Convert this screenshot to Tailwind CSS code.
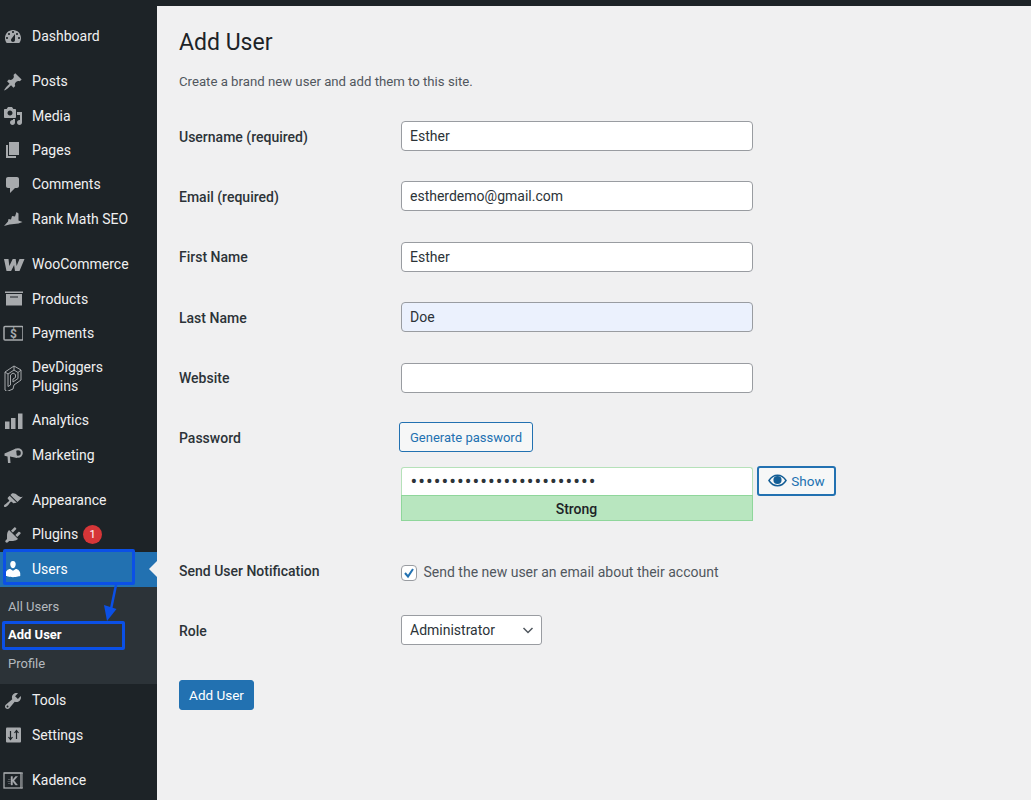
<!DOCTYPE html>
<html lang="en">
<head>
<meta charset="UTF-8">
<title>Add User</title>
<script src="https://cdn.jsdelivr.net/npm/@tailwindcss/browser@4"></script>
</head>
<body class="bg-[#f0f0f1] font-['Roboto','Noto_Sans',sans-serif] text-[14px] text-[#1d2327] h-[800px] overflow-hidden">
<div class="h-[6px] bg-[#1d2327]"></div>
<div class="flex">
  <!-- Sidebar -->
  <nav class="relative w-[156.5px] h-[794px] shrink-0 bg-[#1d2327] text-[#f0f0f1] pt-[13.500px]">
    <a class="flex items-center h-[34.4px]"><svg class="w-5 h-5 ml-[3px] mr-[9px] fill-[#a7aaad]" viewBox="0 0 20 20"><path d="M3.76 16h12.48c1.1-1.37 1.76-3.11 1.76-5 0-4.42-3.58-8-8-8s-8 3.58-8 8c0 1.89.66 3.63 1.76 5zM10 4c.55 0 1 .45 1 1s-.45 1-1 1-1-.45-1-1 .45-1 1-1zM6 6c.55 0 1 .45 1 1s-.45 1-1 1-1-.45-1-1 .45-1 1-1zm8 0c.55 0 1 .45 1 1s-.45 1-1 1-1-.45-1-1 .45-1 1-1zm-5.37 5.55L12 7v6c0 1.1-.9 2-2 2s-2-.9-2-2c0-.57.24-1.08.63-1.45zM4 10c.55 0 1 .45 1 1s-.45 1-1 1-1-.45-1-1 .45-1 1-1zm12 0c.55 0 1 .45 1 1s-.45 1-1 1-1-.45-1-1 .45-1 1-1z" fill-rule="evenodd"/></svg>Dashboard</a>

    <a class="flex items-center h-[34.4px] mt-[10.6px]"><svg class="w-5 h-5 ml-[3px] mr-[9px] fill-[#a7aaad]" viewBox="0 0 20 20"><path d="M10.44 3.02l1.82-1.82 6.36 6.35-1.83 1.82c-1.05-.68-2.48-.57-3.41.36l-.75.75c-.92.93-1.04 2.35-.35 3.41l-1.83 1.82-2.41-2.41-2.8 2.79c-.42.42-3.38 2.71-3.8 2.29s1.86-3.39 2.28-3.81l2.79-2.79L4.1 9.36l1.83-1.82c1.05.69 2.48.57 3.4-.36l.75-.75c.93-.92 1.05-2.35.36-3.41z"/></svg>Posts</a>
    <a class="flex items-center h-[34.4px]"><svg class="w-5 h-5 ml-[3px] mr-[9px] fill-[#a7aaad]" viewBox="0 0 20 20"><path d="M13 11V4c0-.55-.45-1-1-1h-1.67L9 1H5L3.67 3H2c-.55 0-1 .45-1 1v7c0 .55.45 1 1 1h10c.55 0 1-.45 1-1zM7 4.500c1.380 0 2.500 1.120 2.500 2.500S8.380 9.500 7 9.500 4.500 8.380 4.500 7 5.620 4.500 7 4.500zM14 6h5v10.500c0 1.380-1.120 2.500-2.500 2.500S14 17.880 14 16.500s1.120-2.500 2.500-2.500c.17 0 .34.02.5.05V9h-3V6zm-4 8.050V13h2v3.500c0 1.380-1.120 2.500-2.500 2.500S7 17.880 7 16.500 8.120 14 9.500 14c.17 0 .34.02.5.05z" fill-rule="evenodd"/></svg>Media</a>
    <a class="flex items-center h-[34.4px]"><svg class="w-5 h-5 ml-[3px] mr-[9px] fill-[#a7aaad]" viewBox="0 0 20 20"><path d="M6 15V2h10v13H6zm-1 1h8v2H3V5h2v11z"/></svg>Pages</a>
    <a class="flex items-center h-[34.4px]"><svg class="w-5 h-5 ml-[3px] mr-[9px] fill-[#a7aaad]" viewBox="0 0 20 20"><path d="M5 2h9c1.100 0 2 .9 2 2v7c0 1.100-.9 2-2 2h-2l-5 5v-5H5c-1.100 0-2-.9-2-2V4c0-1.100.9-2 2-2z"/></svg>Comments</a>
    <a class="flex items-center h-[34.4px]"><svg class="w-[21px] h-5 ml-[3px] mr-[8px] fill-[#a7aaad]" viewBox="0 0 21 20"><path d="M1 17l4-4.500.5-2.500 2.500.5L9 7l3 .5L13.500 3l2 1.500v7l4 1.500-4 1.500-9 1z"/></svg>Rank Math SEO</a>

    <a class="flex items-center h-[34.4px] mt-[11px]"><svg class="w-[22px] h-5 ml-[3px] mr-[7px]" viewBox="0 0 22 20"><path d="M1 4h4.500l.8 7 3.400-7h3l.9 7 2.900-7h5l-5 12h-4.500l-.9-6-3 6H3.500z" class="fill-[#a7aaad]"/></svg>WooCommerce</a>
    <a class="flex items-center h-[34.4px]"><svg class="w-5 h-5 ml-[3px] mr-[9px] fill-[#a7aaad]" viewBox="0 0 20 20"><path d="M2 2.500h18v1.500H2zM3 5h16v11.500H3zm4 2.500v1h8v-1z" fill-rule="evenodd"/></svg>Products</a>
    <a class="flex items-center h-[34.4px]"><svg class="w-5 h-5 ml-[3px] mr-[9px]" viewBox="0 0 20 20"><rect x="1" y="3.500" width="19" height="13.500" rx="1" fill="none" stroke="#a7aaad" stroke-width="1.500"/><text x="10.500" y="14.500" text-anchor="middle" font-size="12" font-weight="700" fill="#a7aaad">$</text></svg>Payments</a>
    <a class="flex items-center h-[53px]"><svg class="w-5 h-[28px] ml-[3px] mr-[9px] fill-none stroke-[#a7aaad]" viewBox="0 0 20 28" stroke-width="1"><path d="M2 9l9-6 7 4v10l-7 5-1 4-6 2.500-2-1.500zM5 11l6-4 4 2.500v6l-5 3.500v-3l2.500-1.500v-3L10 10 7.500 12v10L5 23.500zM2 9l3 2M11 3v4M18 7l-3 2.500"/></svg><span class="leading-[19px]">DevDiggers<br>Plugins</span></a>
    <a class="flex items-center h-[34.4px]"><svg class="w-5 h-5 ml-[3px] mr-[9px] fill-[#a7aaad]" viewBox="0 0 20 20"><path d="M2 10.500h4.500V18H2zM8 7h4.500v11H8zM15 2.500h4.500V18H15z"/></svg>Analytics</a>
    <a class="flex items-center h-[34.4px]"><svg class="w-5 h-5 ml-[3px] mr-[9px]" viewBox="0 0 20 20"><path d="M1.500 8.500L13 3.500l1 9.500-7-1.500.5 6.500H5l-.5-6.500-3-.7z" fill="#a7aaad"/><circle cx="15" cy="8" r="3.800" fill="none" stroke="#a7aaad" stroke-width="2"/></svg>Marketing</a>

    <a class="flex items-center h-[34.4px] mt-[11px]"><svg class="w-5 h-5 ml-[3px] mr-[9px] fill-[#a7aaad]" viewBox="0 0 20 20"><path d="M14.480 11.060L7.410 3.990l1.500-1.500c.5-.56 2.300-.47 3.510.32 1.210.8 1.430 1.280 2.910 2.100 1.180.64 2.450 1.260 4.450.85zm-.71.71L6.700 4.700 4.930 6.470c-.39.39-.39 1.020 0 1.410l1.060 1.060c.39.39.39 1.030 0 1.420-.6.6-1.430 1.110-2.210 1.690-.35.26-.7.53-1.010.84C1.430 13.230.4 14.900 1.200 15.700s2.470-.22 3.800-1.540c.31-.31.58-.67.84-1.010.58-.79 1.080-1.610 1.690-2.210.39-.39 1.020-.39 1.410 0l1.060 1.060c.39.39 1.020.39 1.410 0z"/></svg>Appearance</a>
    <a class="flex items-center h-[34.4px]"><svg class="w-5 h-5 ml-[3px] mr-[9px] fill-[#a7aaad]" viewBox="0 0 20 20"><path d="M13.110 4.360L9.870 7.600 8 5.730l3.240-3.240c.35-.34 1.050-.2 1.560.32.52.51.66 1.210.31 1.550zm-8 1.770l.91-1.120 9.010 9.010-1.190.84c-.71.71-2.630 1.160-3.820 1.160H6.140L4.900 17.260c-.59.59-1.540.59-2.120 0-.59-.58-.59-1.530 0-2.120l1.240-1.240v-3.880c0-1.130.4-3.190 1.090-3.890zm7.260 3.970l3.240-3.240c.34-.35 1.040-.21 1.550.31.52.51.66 1.210.31 1.550l-3.240 3.250z"/></svg>Plugins<span class="ml-[5px] flex items-center justify-center w-[19px] h-[19px] rounded-full bg-[#d63638] text-white text-[11px]">1</span></a>
    <a class="relative flex items-center h-[34.4px] bg-[#2271b1] text-white"><svg class="w-5 h-5 ml-[3px] mr-[9px] fill-white" viewBox="0 0 20 20"><path d="M10 9.250c-2.270 0-2.730-3.440-2.730-3.440C7 4.020 7.820 2 9.970 2c2.160 0 2.980 2.020 2.710 3.810 0 0-.41 3.440-2.680 3.440zm0 2.570L12.720 10c2.390 0 4.520 2.330 4.520 4.530v2.490s-3.650 1.130-7.240 1.130c-3.650 0-7.240-1.130-7.240-1.130v-2.490c0-2.250 1.940-4.480 4.470-4.480z"/></svg>Users<span class="absolute right-0 top-[9px] border-y-[8px] border-y-transparent border-r-[8px] border-r-[#f0f0f1]"></span></a>
    <div class="bg-[#2c3338] h-[97px] pt-[5.500px] text-[13px] text-[#b4b9be] pl-[8px]">
      <a class="flex items-center h-[28.500px]">All Users</a>
      <a class="flex items-center h-[28.500px] font-bold text-white">Add User</a>
      <a class="flex items-center h-[28.500px]">Profile</a>
    </div>
    <a class="flex items-center h-[34.4px]"><svg class="w-5 h-5 ml-[3px] mr-[9px] fill-[#a7aaad]" viewBox="0 0 20 20"><path d="M16.680 9.770c-1.340 1.340-3.300 1.670-4.950.99l-5.410 6.520c-.99.99-2.590.99-3.580 0s-.99-2.590 0-3.570l6.520-5.420c-.68-1.650-.35-3.610.99-4.950 1.280-1.280 3.120-1.620 4.720-1.060l-2.890 2.890 2.820 2.820 2.860-2.870c.53 1.580.18 3.390-1.080 4.650zM3.810 16.210c.4.39 1.040.39 1.430 0 .4-.4.4-1.040 0-1.430-.39-.4-1.030-.4-1.430 0-.39.39-.39 1.030 0 1.430z" fill-rule="evenodd"/></svg>Tools</a>
    <a class="flex items-center h-[34.4px]"><svg class="w-5 h-5 ml-[3px] mr-[9px]" viewBox="0 0 20 20"><rect x="3" y="2.500" width="15" height="15" rx="1" fill="#a7aaad"/><path d="M7.500 6v8M5.500 12l2 2.500 2-2.500M13.500 14V6M11.500 8l2-2.500 2 2.500" stroke="#1d2327" stroke-width="1.200" fill="none"/></svg>Settings</a>
    <a class="flex items-center h-[34.4px] mt-[11px]"><svg class="w-5 h-5 ml-[3px] mr-[9px]" viewBox="0 0 20 20"><rect x="1" y="2" width="17" height="15" fill="none" stroke="#a7aaad" stroke-width="1.300"/><path d="M1 2h19v2M18 17h2V4" fill="none" stroke="#a7aaad" stroke-width="1"/><path d="M8 5.500h1.500v3.500l3-3.500h2l-3.500 4 3.500 4.500h-2l-3-4v4H8zM5 8.500h2.500M4.500 10.500h3M5 12.500h2.500" fill="#a7aaad" stroke="#a7aaad" stroke-width=".4"/></svg>Kadence</a>

    <!-- annotation over the menu -->
    <div class="absolute left-[2.500px] top-[543px] w-[132px] h-[36px] border-[3px] border-[#0b50e6] rounded-[2px]"></div>
    <div class="absolute left-[1.500px] top-[615px] w-[123.500px] h-[29px] border-[3px] border-[#0b50e6] rounded-[2px]"></div>
    <svg class="absolute left-0 top-[570px] w-[130px] h-[50px]" viewBox="0 0 130 50"><path d="M116 9l-5 24" stroke="#0b50e6" stroke-width="2.500" fill="none"/><path d="M104 29l12.500 4-9.500 12z" fill="#0b50e6"/></svg>
  </nav>

  <!-- Main -->
  <main class="pl-[22.500px] flex-1">
    <h1 class="mt-[22px] h-[30px] leading-[30px] text-[23px] font-normal">Add User</h1>
    <p class="mt-[14px] h-[20px] leading-[20px] text-[13.200px] text-[#50575e]">Create a brand new user and add them to this site.</p>

    <div class="mt-[29px] grid grid-cols-[221.500px_352px] items-center h-[30px]">
      <label class="font-medium text-[14px] text-[#2c3338] pt-[2px]">Username (required)</label>
      <input value="Esther" class="h-[30px] w-full bg-white border border-[#999ca1] rounded-[4px] px-[8.500px] text-[#2c3338] text-[14px]">
    </div>
    <div class="mt-[30.400px] grid grid-cols-[221.500px_352px] items-center h-[30px]">
      <label class="font-medium text-[14px] text-[#2c3338] pt-[2px]">Email (required)</label>
      <input value="estherdemo@gmail.com" class="h-[30px] w-full bg-white border border-[#999ca1] rounded-[4px] px-[8.500px] text-[#2c3338] text-[14px]">
    </div>
    <div class="mt-[30.400px] grid grid-cols-[221.500px_352px] items-center h-[30px]">
      <label class="font-medium text-[14px] text-[#2c3338] pt-[2px]">First Name</label>
      <input value="Esther" class="h-[30px] w-full bg-white border border-[#999ca1] rounded-[4px] px-[8.500px] text-[#2c3338] text-[14px]">
    </div>
    <div class="mt-[30.400px] grid grid-cols-[221.500px_352px] items-center h-[30px]">
      <label class="font-medium text-[14px] text-[#2c3338] pt-[2px]">Last Name</label>
      <input value="Doe" class="h-[30px] w-full bg-[#ebf1fd] border border-[#999ca1] rounded-[4px] px-[8.500px] text-[#2c3338] text-[14px]">
    </div>
    <div class="mt-[30.400px] grid grid-cols-[221.500px_352px] items-center h-[30px]">
      <label class="font-medium text-[14px] text-[#2c3338] pt-[2px]">Website</label>
      <input class="h-[30px] w-full bg-white border border-[#999ca1] rounded-[4px] px-[8.500px] text-[#2c3338] text-[14px]">
    </div>

    <div class="mt-[30.400px] grid grid-cols-[220px_auto] items-start">
      <label class="font-medium text-[14px] text-[#2c3338] leading-[30px]">Password</label>
      <div>
        <button class="block h-[30px] w-[134px] bg-[#f6f7f7] border border-[#2271b1] rounded-[3px] text-[#2271b1] text-[13px] -mt-[.5px]">Generate password</button>
        <div class="mt-[14.500px] flex items-start">
          <div class="w-[352px] ml-[1.500px]">
            <input type="password" value="abcdefghijklmnopqrstuvwx" class="block h-[28px] w-full bg-white border border-b-0 border-[#b5e1b9] rounded-t-[3px] px-[9px] text-[#2c3338] text-[20px] tracking-[1px]">
            <div class="h-[26px] bg-[#b8e6bf] border border-[#8fd69b] text-center text-[14px] font-medium leading-[26px]">Strong</div>
          </div>
          <button class="ml-[4.500px] -mt-[1px] h-[30px] w-[79px] flex items-center justify-center gap-[4px] bg-[#f6f7f7] border-2 border-[#2271b1] rounded-[3px] text-[#2271b1] text-[13.500px]">
            <svg class="w-[19px] h-[19px]" viewBox="0 0 20 20"><path d="M1 10c2.500-4 5.500-5.500 9-5.500s6.500 1.500 9 5.500c-2.500 4-5.500 5.500-9 5.500S3.500 14 1 10z" fill="none" stroke="#135e96" stroke-width="1.500"/><circle cx="10" cy="9.500" r="4.300" fill="#135e96"/></svg>Show
          </button>
        </div>
      </div>
    </div>

    <div class="mt-[36px] grid grid-cols-[221.500px_auto] items-center h-[30px]">
      <label class="font-medium text-[14px] text-[#2c3338]">Send User Notification</label>
      <label class="flex items-center text-[#50575e] text-[14px] pt-[2px]">
        <span class="relative w-[16px] h-[16px] mr-[7px]">
          <input type="checkbox" checked class="appearance-none block w-[16px] h-[16px] bg-white border border-[#999ca1] rounded-[4px]">
          <svg class="absolute left-0 top-0 w-[16px] h-[16px]" viewBox="0 0 16 16"><path d="M4 8l3 3.500 5-7.500" fill="none" stroke="#2271b1" stroke-width="2"/></svg>
        </span>
        Send the new user an email about their account
      </label>
    </div>

    <div class="mt-[28px] grid grid-cols-[221.500px_auto] items-center h-[30px]">
      <label class="font-medium text-[14px] text-[#2c3338] pt-[3px]">Role</label>
      <span class="relative block w-[141px] h-[30px]">
        <select class="appearance-none block w-full h-[30px] bg-white border border-[#999ca1] rounded-[3px] pl-[8.500px] pt-[2px] text-[#2c3338] text-[14px]"><option>Administrator</option></select>
        <svg class="absolute right-[8px] top-[9.500px] w-[12px] h-[12px]" viewBox="0 0 12 12"><path d="M1.500 4l4.500 4.500L10.500 4" fill="none" stroke="#50575e" stroke-width="1.500"/></svg>
      </span>
    </div>

    <button class="mt-[35px] block h-[30px] w-[75px] bg-[#2271b1] border border-[#2271b1] rounded-[3px] text-white text-[13.500px]">Add User</button>
  </main>
</div>
</body>
</html>
